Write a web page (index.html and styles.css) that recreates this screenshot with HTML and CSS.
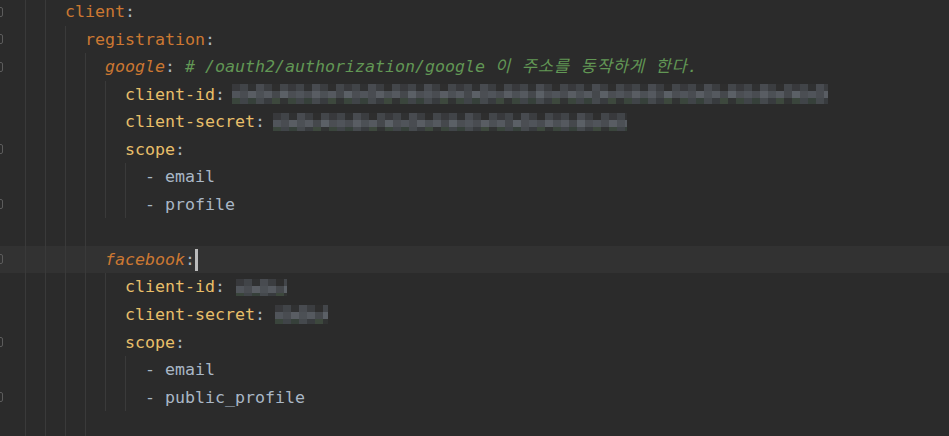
FILE: index.html
```html
<!DOCTYPE html>
<html lang="ko">
<head>
<meta charset="utf-8">
<title>application.yml</title>
<link rel="stylesheet" href="styles.css">
</head>
<body>
<div class="editor">
  <div class="line"><span class="gut"><i class="mark"></i></span><span class="ind"></span><span class="ind g"></span><span class="ind g"></span><span class="code"><span class="k">client</span><span class="p">:</span></span></div>
  <div class="line"><span class="gut"><i class="mark"></i></span><span class="ind"></span><span class="ind g"></span><span class="ind g"></span><span class="ind g"></span><span class="code"><span class="k">registration</span><span class="p">:</span></span></div>
  <div class="line"><span class="gut"><i class="mark"></i></span><span class="ind"></span><span class="ind g"></span><span class="ind g"></span><span class="ind g"></span><span class="ind g"></span><span class="code"><span class="k it">google</span><span class="p">: </span><span class="cm"># /oauth2/authorization/google <span class="ko">이 주소를 동작하게 한다.</span></span></span></div>
  <div class="line"><span class="gut"></span><span class="ind"></span><span class="ind g"></span><span class="ind g"></span><span class="ind g"></span><span class="ind g"></span><span class="ind g"></span><span class="code"><span class="k2">client-id</span><span class="p">: </span></span><span class="blur b-id"></span></div>
  <div class="line"><span class="gut"></span><span class="ind"></span><span class="ind g"></span><span class="ind g"></span><span class="ind g"></span><span class="ind g"></span><span class="ind g"></span><span class="code"><span class="k2">client-secret</span><span class="p">: </span></span><span class="blur b-secret"></span></div>
  <div class="line"><span class="gut"><i class="mark"></i></span><span class="ind"></span><span class="ind g"></span><span class="ind g"></span><span class="ind g"></span><span class="ind g"></span><span class="ind g"></span><span class="code"><span class="k2">scope</span><span class="p">:</span></span></div>
  <div class="line"><span class="gut"></span><span class="ind"></span><span class="ind g"></span><span class="ind g"></span><span class="ind g"></span><span class="ind g"></span><span class="ind g"></span><span class="ind g"></span><span class="code"><span class="v">- email</span></span></div>
  <div class="line"><span class="gut"><i class="mark"></i></span><span class="ind"></span><span class="ind g"></span><span class="ind g"></span><span class="ind g"></span><span class="ind g"></span><span class="ind g"></span><span class="ind g"></span><span class="code"><span class="v">- profile</span></span></div>
  <div class="line"><span class="gut"></span><span class="ind"></span><span class="ind g"></span><span class="ind g"></span><span class="ind g"></span><span class="ind g"></span></div>
  <div class="line current"><span class="gut"><i class="mark"></i></span><span class="ind"></span><span class="ind g"></span><span class="ind g"></span><span class="ind g"></span><span class="ind g"></span><span class="code"><span class="k it">facebook</span><span class="p">:</span></span><span class="caret"></span></div>
  <div class="line"><span class="gut"></span><span class="ind"></span><span class="ind g"></span><span class="ind g"></span><span class="ind g"></span><span class="ind g"></span><span class="ind g"></span><span class="code"><span class="k2">client-id</span><span class="p">: </span></span><span class="blur b-fid"></span></div>
  <div class="line"><span class="gut"></span><span class="ind"></span><span class="ind g"></span><span class="ind g"></span><span class="ind g"></span><span class="ind g"></span><span class="ind g"></span><span class="code"><span class="k2">client-secret</span><span class="p">: </span></span><span class="blur b-fsecret"></span></div>
  <div class="line"><span class="gut"><i class="mark"></i></span><span class="ind"></span><span class="ind g"></span><span class="ind g"></span><span class="ind g"></span><span class="ind g"></span><span class="ind g"></span><span class="code"><span class="k2">scope</span><span class="p">:</span></span></div>
  <div class="line"><span class="gut"></span><span class="ind"></span><span class="ind g"></span><span class="ind g"></span><span class="ind g"></span><span class="ind g"></span><span class="ind g"></span><span class="ind g"></span><span class="code"><span class="v">- email</span></span></div>
  <div class="line"><span class="gut"><i class="mark"></i></span><span class="ind"></span><span class="ind g"></span><span class="ind g"></span><span class="ind g"></span><span class="ind g"></span><span class="ind g"></span><span class="ind g"></span><span class="code"><span class="v">- public_profile</span></span></div>
  <div class="line"><span class="gut"></span><span class="ind"></span><span class="ind g"></span><span class="ind g"></span><span class="ind g"></span><span class="ind g"></span></div>
</div>
</body>
</html>
```

FILE: styles.css
```css
html, body {
  margin: 0;
  padding: 0;
  background: #2b2b2b;
  height: 436px;
  overflow: hidden;
}

.editor {
  margin-top: -2px;
  font-family: "DejaVu Sans Mono", "Noto Sans CJK KR", monospace;
  font-size: 16.61px;
  color: #a9b7c6;
}

.line {
  display: flex;
  height: 27.55px;
  line-height: 28.5px;
  white-space: pre;
}

.line.current {
  background: #323232;
}

.gut {
  flex: none;
  width: 5px;
  overflow: hidden;
}

.mark {
  display: block;
  box-sizing: border-box;
  width: 10px;
  height: 10px;
  margin-top: 8.5px;
  margin-left: -7px;
  border: 1px solid #5c5c5c;
  border-radius: 2px;
}

.ind {
  flex: none;
  width: 20px;
  box-sizing: border-box;
}

.ind.g {
  border-left: 1px solid #3a3a3a;
}

.code {
  flex: none;
}

.k {
  color: #cc7832;
}

.k2 {
  color: #e8bf6a;
}

.it {
  font-style: italic;
}

.p {
  color: #a9b7c6;
}

.v {
  color: #a9b7c6;
}

.cm {
  color: #629755;
  font-style: italic;
}

.ko {
  letter-spacing: 0.75px;
}

.caret {
  flex: none;
  align-self: center;
  width: 3px;
  height: 22px;
  margin-top: 1px;
  background: #bbbbbb;
}

.blur {
  flex: none;
  align-self: center;
  height: 20px;
  background:
    repeating-linear-gradient(90deg, #38393c 0 8px, #414448 8px 16px, #303132 16px 24px, #484b50 24px 32px, #3b3d40 32px 40px, #2e2e2e 40px 48px, #43464a 48px 56px) 0 0 / 100% 7px no-repeat,
    repeating-linear-gradient(90deg, #50545a 0 8px, #494c51 8px 16px, #595d63 16px 24px, #4c5055 24px 32px, #55595f 32px 40px, #45484c 40px 48px, #5b6066 48px 56px, #4b4e53 56px 64px) 0 7px / 100% 7px no-repeat,
    repeating-linear-gradient(90deg, #3a453c 0 8px, #404448 8px 16px, #36403a 16px 24px, #45494d 24px 32px, #383b3e 32px 40px, #3d483d 40px 48px, #313333 48px 56px) 0 14px / 100% 6px no-repeat;
}

.b-id {
  width: 596px;
  margin-left: -3px;
}

.b-secret {
  width: 354px;
  margin-left: -2px;
  height: 18px;
}

.b-fid {
  width: 51px;
  margin-left: 1px;
  height: 17px;
}

.b-fsecret {
  width: 53px;
  margin-left: 0;
  height: 19px;
}
```
